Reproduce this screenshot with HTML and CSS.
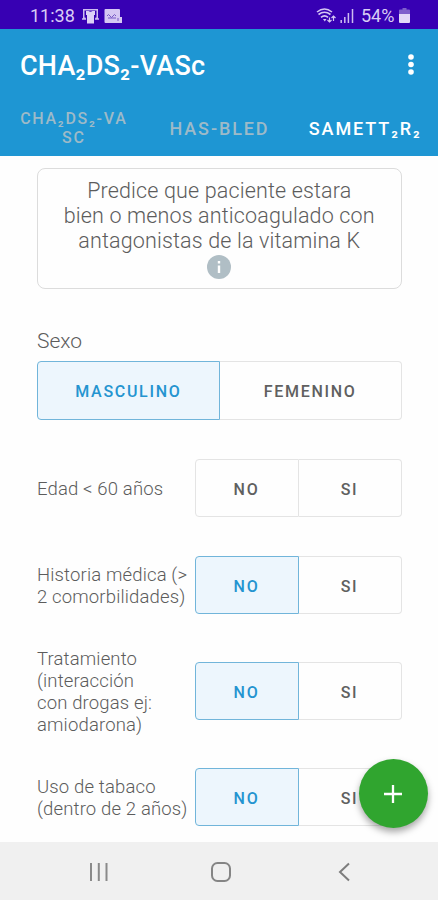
FILE: index.html
```html
<!DOCTYPE html>
<html lang="es">
<head>
    <meta charset="UTF-8">
    <meta name="viewport" content="width=device-width, initial-scale=1.0">
    <title>CHA₂DS₂-VASc</title>
    <link rel="stylesheet" href="styles.css">
</head>
<body>
    <div class="status-bar">
        <span class="clock">11:38</span>
        <svg class="status-shirt" width="17" height="16" viewBox="0 0 17 16">
            <path d="M1 1h15v10h-2.500v-1.500h1V2.500h-12v7h1V11H1z" fill="#cdbcf0"/>
            <path d="M4 3h2.500q2 1.500 4 0H13v4h-1v8.500H5V7H4z" fill="#ddd0f7"/>
            <path d="M0 11h4M13 11h4" stroke="#cdbcf0" stroke-width="1.500"/>
        </svg>
        <svg class="status-image" width="18" height="14" viewBox="0 0 18 14">
            <path d="M1.500 0h13.500q1 0 1 1v7h2v6H1.500q-1 0-1-1V1q0-1 1-1z" fill="#d5c7f3"/>
            <path d="M3 7q1.500-3 3 0t3 0 3 0M4 9h8M14 9v3" fill="none" stroke="#7659c5"/>
        </svg>
        <span class="spacer"></span>
        <svg width="20" height="16" viewBox="0 0 20 16" fill="none" stroke="#d5c7f3" stroke-width="1.600">
            <path d="M1 4q7.500-6 15 0M2.500 6.500q6-4.500 12 0M5 9.300q3.500-3 7 0"/>
            <path d="M7 11h3.500l-1.700 2.500z" fill="#d5c7f3" stroke="none"/>
            <path d="M13.500 14V9.500m-2 2.500l2 2 2-2M17.500 13V8m-2 2l2-2 2 2" stroke-width="1.200"/>
        </svg>
        <svg class="status-signal" width="14" height="15" viewBox="0 0 14 15" stroke="#cdbcf0" stroke-width="1.500">
            <path d="M1.200 15v-3M4.800 15V9M8.400 15V5M12.500 15V1"/>
        </svg>
        <span class="percent">54%</span>
        <svg width="11" height="15" viewBox="0 0 11 15">
            <path d="M3.500 0h4v1.500H10q1 0 1 1V7H0V2.500q0-1 1-1h2.500z" fill="#7e5fcc"/>
            <path d="M0 6h11v8q0 1-1 1H1q-1 0-1-1z" fill="#e2d8f8"/>
        </svg>
    </div>

    <header class="app-bar">
        <div class="toolbar">
            <h1>CHA₂DS₂-VASc</h1>
            <svg width="6" height="22" viewBox="0 0 6 22" fill="#fff">
                <circle cx="3" cy="3" r="2.800"/>
                <circle cx="3" cy="10.500" r="2.800"/>
                <circle cx="3" cy="18" r="2.800"/>
            </svg>
        </div>
        <nav class="tabs">
            <div class="tab small">CHA₂DS₂-VA<br>SC</div>
            <div class="tab">HAS-BLED</div>
            <div class="tab active">SAMETT₂R₂</div>
        </nav>
    </header>

    <main class="content">
        <div class="card">
            Predice que paciente estara<br>bien o menos anticoagulado con<br>antagonistas de la vitamina K
            <svg class="info" width="24" height="24" viewBox="0 0 24 24">
                <circle cx="12" cy="12" r="12" fill="#b0bec5"/>
                <path d="M12 10.500V18M12 6v2.500" stroke="#fff" stroke-width="2.400"/>
            </svg>
        </div>

        <div class="sex-label">Sexo</div>
        <div class="toggle">
            <div class="option selected">MASCULINO</div>
            <div class="option">FEMENINO</div>
        </div>

        <div class="row age">
            <div class="label">Edad &lt; 60 años</div>
            <div class="toggle">
                <div class="option">NO</div>
                <div class="option">SI</div>
            </div>
        </div>
        <div class="row history">
            <div class="label">Historia médica (&gt;<br>2 comorbilidades)</div>
            <div class="toggle">
                <div class="option selected">NO</div>
                <div class="option">SI</div>
            </div>
        </div>
        <div class="row">
            <div class="label">Tratamiento<br>(interacción<br>con drogas ej:<br>amiodarona)</div>
            <div class="toggle">
                <div class="option selected">NO</div>
                <div class="option">SI</div>
            </div>
        </div>
        <div class="row">
            <div class="label">Uso de tabaco<br>(dentro de 2 años)</div>
            <div class="toggle">
                <div class="option selected">NO</div>
                <div class="option">SI</div>
            </div>
        </div>
    </main>

    <div class="fab">
        <svg width="18" height="18" viewBox="0 0 18 18" stroke="#fff" stroke-width="2.300">
            <path d="M9 0v18M0 9h18"/>
        </svg>
    </div>

    <footer class="nav-bar">
        <svg width="20" height="20" viewBox="0 0 20 20" stroke="#8a8a8a" stroke-width="2">
            <path d="M2 1v18M9.800 1v18M17.500 1v18"/>
        </svg>
        <svg width="22" height="22" viewBox="0 0 22 22" fill="none" stroke="#858585" stroke-width="2">
            <rect x="2" y="2" width="18" height="18" rx="5.500"/>
        </svg>
        <svg width="14" height="20" viewBox="0 0 14 20" fill="none" stroke="#7d7d7d" stroke-width="2">
            <path d="M12 1.500L3 10l9 8.500"/>
        </svg>
    </footer>
</body>
</html>
```
FILE: styles.css
```css
* {
    box-sizing: border-box;
}
body {
    font-family: Roboto, "Liberation Sans", sans-serif;
    background-color: #fefefe;
    color: #5c5c5c;
    margin: 0;
    height: 900px;
    display: flex;
    flex-direction: column;
    position: relative;
    overflow: hidden;
}
svg {
    display: block;
    flex: none;
}
.status-bar {
    height: 29px;
    background: #3700b3;
    color: #d9cdf5;
    display: flex;
    align-items: center;
    padding: 2px 28px 0 30px;
    font-size: 18px;
    flex: none;
}
.clock {
    width: 52px;
}
.status-image {
    margin-left: 5px;
}
.spacer {
    flex: 1;
}
.status-signal {
    margin: 0 7px 0 4px;
}
.percent {
    width: 38px;
}
.app-bar {
    height: 127px;
    background: #1e96d3;
    color: #fff;
    flex: none;
}
.toolbar {
    height: 71px;
    display: flex;
    align-items: center;
    justify-content: space-between;
    padding: 0 24px 0 20px;
}
h1 {
    font-size: 27px;
    font-weight: 500;
    letter-spacing: 0.200px;
    margin: 2px 0 0;
}
.tabs {
    height: 56px;
    display: grid;
    grid-template-columns: repeat(3, 1fr);
    align-items: center;
    text-align: center;
    font-size: 18px;
    line-height: 19px;
    font-weight: 500;
    letter-spacing: 1.900px;
    padding-left: 1px;
}
.tab {
    color: #9dbac8;
    white-space: nowrap;
}
.tab.small {
    font-size: 16px;
    letter-spacing: 1.700px;
}
.tab.active {
    color: #fff;
}
.content {
    flex: 1;
    padding: 12px 36.500px 0 37px;
    min-height: 0;
}
.card {
    height: 121px;
    border: 1.500px solid #dcdcdc;
    border-radius: 8px;
    padding-top: 9px;
    text-align: center;
    font-size: 21.500px;
    font-weight: 300;
    letter-spacing: 0.150px;
    line-height: 25px;
}
.info {
    margin: 2px auto 0;
}
.sex-label {
    margin-top: 39px;
    font-size: 21px;
    font-weight: 300;
    line-height: 26px;
}
.toggle {
    height: 59px;
    display: flex;
    margin-top: 7px;
}
.option {
    flex: 1;
    display: flex;
    align-items: center;
    justify-content: center;
    padding-top: 1px;
    border: 1px solid #e4e4e4;
    border-radius: 0 4px 4px 0;
    font-size: 16px;
    font-weight: 500;
    letter-spacing: 1.700px;
    color: #606060;
}
.option:first-child {
    border-radius: 4px 0 0 4px;
}
.option + .option {
    border-left: none;
}
.option.selected {
    background: #edf6fd;
    border-color: #71b5da;
    color: #2494d0;
}
.row {
    display: flex;
    align-items: center;
    margin-top: 33px;
}
.row.age,
.row.history {
    margin-top: 39px;
}
.row .toggle {
    width: 207px;
    height: 58px;
    margin-top: 0;
    flex: none;
}
.row .option {
    padding-top: 3px;
}
.label {
    flex: 1;
    margin: 1px 0 -1px;
    font-size: 18.500px;
    font-weight: 300;
    letter-spacing: 0.150px;
    line-height: 22px;
    white-space: nowrap;
}
.fab {
    position: absolute;
    left: 359px;
    top: 759px;
    width: 69px;
    height: 69px;
    border-radius: 50%;
    background: #30a52f;
    box-shadow: 0 4px 7px rgba(0, 0, 0, 0.35);
    display: flex;
    align-items: center;
    justify-content: center;
}
.fab svg {
    margin-right: 1px;
}
.nav-bar {
    height: 58px;
    background: #f0f0f0;
    display: flex;
    align-items: center;
    justify-content: space-between;
    padding: 2px 87px 0 89px;
    z-index: 1;
    flex: none;
}
.nav-bar svg:nth-child(2) {
    margin-right: 4px;
}
```
